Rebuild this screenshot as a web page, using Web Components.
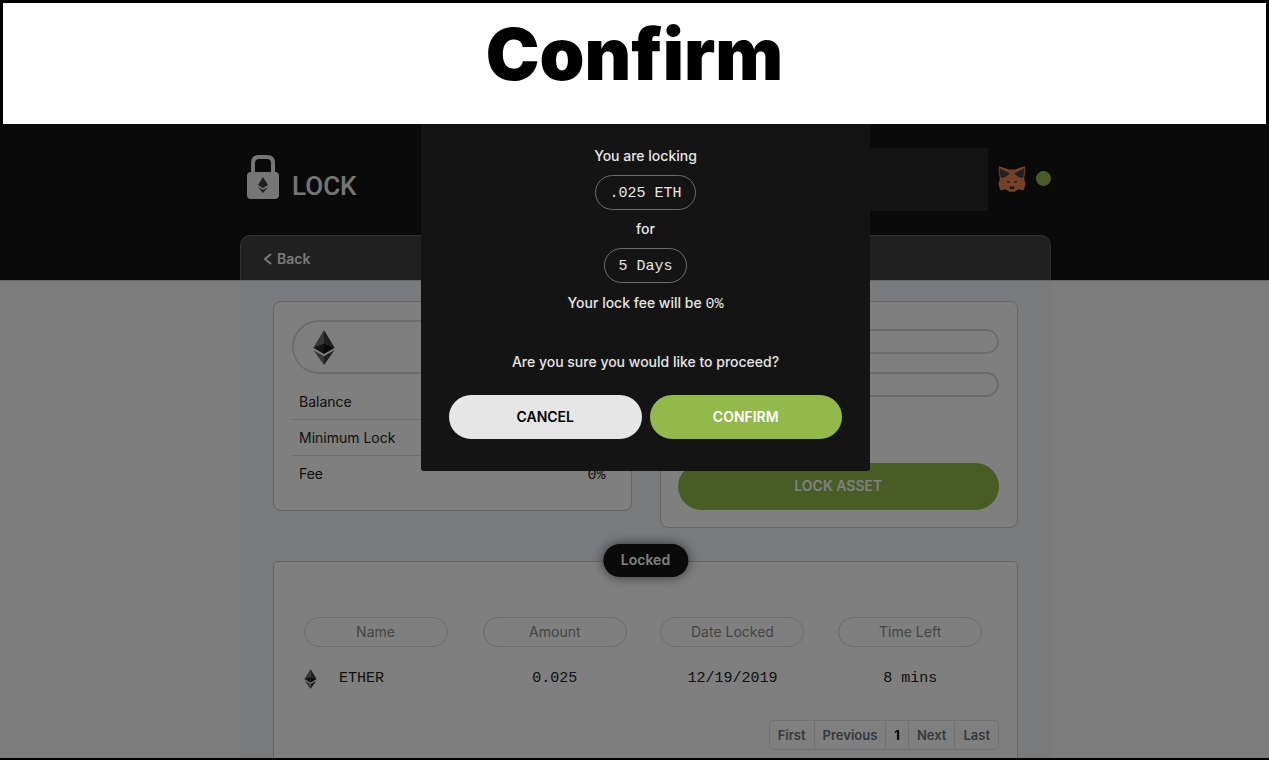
<!DOCTYPE html>
<html lang="en">
<head>
<meta charset="utf-8">
<meta name="viewport" content="width=device-width, initial-scale=1">
<title>Lock - Confirm</title>
<style>
  html, body {
    height: 100%;
    margin: 0;
  }

  body {
    --ink: #141414;
    --green: #93b94a;
    --line: #cacaca;
    --line-soft: #dadada;
    --mono: "Liberation Mono", monospace;
    --shift: 22px;

    display: flex;
    flex-direction: column;
    box-sizing: border-box;
    border-bottom: 2px solid #000;
    overflow: hidden;
    font: 14px/20px Inter, sans-serif;
    color: #222;
  }
</style>
</head>
<body>

<title-banner>Confirm</title-banner>

<lock-app>
  <app-header slot="header"></app-header>

  <asset-card slot="asset"></asset-card>
  <lock-form slot="form"></lock-form>
  <locked-table slot="table"></locked-table>

  <confirm-modal slot="modal" amount=".025 ETH" duration="5 Days" fee="0%"></confirm-modal>
</lock-app>

<script>
// Small base class: subclasses only return their markup.
class BaseElement extends HTMLElement {
  constructor() {
    super();
    this.attachShadow({ mode: "open" });
  }

  connectedCallback() {
    this.shadowRoot.innerHTML = this.template();
  }
}

class TitleBanner extends BaseElement {
  template() {
    return `
      <style>
        :host {
          display: block;
          flex: none;
          border: 3px solid #000;
          border-bottom: 0;
          background: #fff;
        }

        h1 {
          margin: 0;
          padding-bottom: 19px;
          text-align: center;
          color: #000;
          font-size: 72px;
          font-weight: 900;
          line-height: 102px;
        }
      </style>
      <h1><slot></slot></h1>
    `;
  }
}

class LockApp extends BaseElement {
  template() {
    return `
      <style>
        :host {
          display: flex;
          flex-direction: column;
          flex: 1;
          min-height: 0;
          position: relative;
          overflow: hidden;
          background: #f8f8fb;
        }

        .body {
          flex: 1;
          padding-left: var(--shift);
        }

        .panel {
          box-sizing: border-box;
          max-width: 811px;
          height: 100%;
          margin: 0 auto;
          padding: 20px 32px 0;
          border: 1px solid #eef1f5;
          border-top: 0;
          background: #f2f5f9;
        }

        .cards {
          display: grid;
          grid-template-columns: 1fr 1fr;
          align-items: start;
          gap: 28px;
          margin-bottom: 33px;
        }
      </style>

      <slot name="header"></slot>

      <div class="body">
        <main class="panel">
          <div class="cards">
            <slot name="asset"></slot>
            <slot name="form"></slot>
          </div>
          <slot name="table"></slot>
        </main>
      </div>

      <slot name="modal"></slot>
    `;
  }
}

class EtherIcon extends BaseElement {
  template() {
    return `
      <style>
        :host { display: inline-flex; }
        svg { display: block; width: 100%; height: 100%; }
      </style>
      <svg viewBox="0 0 64 105" aria-hidden="true">
        <path fill="#6e6e6e" d="M32 0 0 53l32-14z"/>
        <path fill="#3e3e3e" d="M32 0v39l32 14z"/>
        <path fill="#262626" d="M0 53l32 19V39z"/>
        <path fill="#121212" d="M32 39v33l32-19z"/>
        <path fill="#6e6e6e" d="M0 60l32 45V79z"/>
        <path fill="#3e3e3e" d="M32 79v26l32-45z"/>
      </svg>
    `;
  }
}

class AppHeader extends BaseElement {
  template() {
    return `
      <style>
        :host {
          display: block;
          flex: none;
          padding-left: var(--shift);
          background: var(--ink);
          border-bottom: 1px solid #d0d0d0;
        }

        .wrap {
          max-width: 811px;
          margin: 0 auto;
        }

        .top {
          display: flex;
          justify-content: space-between;
          padding: 24px 0;
        }

        .brand {
          display: flex;
          align-items: flex-end;
          gap: 12px;
          padding: 0 7px 11px;
          color: #ececec;
          font: 500 26px/28px Roboto, sans-serif;
          text-decoration: none;
        }

        .brand svg {
          width: 33px;
          height: 45px;
        }

        .account {
          display: flex;
          align-items: center;
          gap: 10px;
        }

        .address {
          width: 240px;
          height: 63px;
          background: #262626;
        }

        .fox {
          width: 28px;
          height: 26px;
          padding-bottom: 2px;
        }

        .status {
          width: 15px;
          height: 15px;
          margin-bottom: 3px;
          border-radius: 50%;
          background: var(--green);
        }

        nav {
          display: flex;
          padding: 13px 22px 11px;
          border: 1px solid #606060;
          border-bottom: 0;
          border-radius: 10px 10px 0 0;
          background: #404040;
        }

        nav a {
          display: flex;
          align-items: center;
          gap: 5px;
          color: #f2f2f2;
          font-weight: 600;
          text-decoration: none;
        }

        nav svg {
          width: 9px;
          height: 12px;
        }
      </style>

      <div class="wrap">
        <header class="top">
          <a class="brand" href="#">
            <svg viewBox="0 0 33 45" aria-hidden="true">
              <path d="M6 20V8q0-6 6-6h8q6 0 6 6v12" fill="none" stroke="#ececec" stroke-width="4"/>
              <rect y="17" width="32" height="27" rx="4" fill="#ececec"/>
              <path d="M16 22l-5 8 5 3 5-3zM11 32l5 6 5-6-5 3z" fill="#3c3c3c"/>
            </svg>
            LOCK
          </a>
          <div class="account">
            <div class="address"></div>
            <svg class="fox" viewBox="0 0 80 77" aria-hidden="true">
              <path d="M2 1 31 10h18L78 1l2 14-4 22 4 16-5 19-16-3-11 7H32l-11-7-16 3-5-19 4-16L0 15z" fill="#e88548"/>
              <path d="M4 7 33 22 24 30 8 36 3 18zM76 7 47 22l9 8 16 6 5-18z" fill="#3c4044"/>
              <path d="M25 45h8l1 5-9-2zM55 45h-8l-1 5 9-2zM34 61h12l1 7H33z" fill="#33302e"/>
            </svg>
            <span class="status"></span>
          </div>
        </header>

        <nav>
          <a href="#">
            <svg viewBox="0 0 9 12" aria-hidden="true">
              <path d="M8 1 2 6l6 5" fill="none" stroke="currentColor" stroke-width="2"/>
            </svg>
            Back
          </a>
        </nav>
      </div>
    `;
  }
}

class AssetCard extends BaseElement {
  template() {
    return `
      <style>
        :host {
          display: block;
          padding: 18px;
          border: 1px solid var(--line);
          border-radius: 8px;
          background: #fff;
        }

        .picker {
          display: flex;
          align-items: center;
          box-sizing: border-box;
          width: 100%;
          height: 54px;
          margin: 0 0 10px;
          padding: 0 19px;
          border: 2px solid var(--line-soft);
          border-radius: 27px;
          background: none;
        }

        ether-icon {
          width: 22px;
          height: 35px;
        }

        dl {
          margin: 0;
        }

        .row {
          display: flex;
          justify-content: space-between;
          padding: 8px 7px 7px;
          border-bottom: 1px solid #dcdcdc;
        }

        .row:last-child {
          border-bottom-color: transparent;
        }

        dd {
          margin: 0;
          font: 15px/24px var(--mono);
          height: 20px;
        }
      </style>

      <button class="picker" type="button" aria-label="Asset">
        <ether-icon></ether-icon>
      </button>

      <dl>
        <div class="row"><dt>Balance</dt><dd></dd></div>
        <div class="row"><dt>Minimum Lock</dt><dd></dd></div>
        <div class="row"><dt>Fee</dt><dd>0%</dd></div>
      </dl>
    `;
  }
}

class LockForm extends BaseElement {
  template() {
    return `
      <style>
        :host {
          display: block;
          padding: 27px 18px 17px 17px;
          border: 1px solid var(--line);
          border-radius: 8px;
          background: #fff;
        }

        form {
          display: grid;
          gap: 18px;
        }

        input {
          box-sizing: border-box;
          width: 100%;
          height: 25px;
          padding: 0 12px;
          border: 2px solid var(--line-soft);
          border-radius: 13px;
          background: none;
          font: 15px/20px var(--mono);
        }

        button {
          height: 47px;
          margin-top: 48px;
          padding: 0 0 2px;
          border: 0;
          border-radius: 24px;
          background: var(--green);
          color: #fff;
          font: 600 14px/20px Inter, sans-serif;
        }
      </style>

      <form>
        <input type="text" aria-label="Amount">
        <input type="text" aria-label="Days">
        <button type="button">LOCK ASSET</button>
      </form>
    `;
  }
}

class LockedTable extends BaseElement {
  constructor() {
    super();
    this.columns = ["Name", "Amount", "Date Locked", "Time Left"];
    this.rows = [["ETHER", "0.025", "12/19/2019", "8 mins"]];
    this.pages = ["First", "Previous", "1", "Next", "Last"];
  }

  template() {
    const head = this.columns
      .map((name) => `<th scope="col"><span>${name}</span></th>`)
      .join("");

    const body = this.rows
      .map(([name, ...cells]) => `
        <tr>
          <td><div class="name"><ether-icon></ether-icon>${name}</div></td>
          ${cells.map((cell) => `<td>${cell}</td>`).join("")}
        </tr>`)
      .join("");

    const pager = this.pages
      .map((page) => `<button type="button"${page === "1" ? ' class="current"' : ""}>${page}</button>`)
      .join("");

    return `
      <style>
        :host {
          display: block;
          position: relative;
          height: 300px;
          padding: 55px 18px 0 11px;
          border: 1px solid var(--line);
          border-radius: 5px;
          background: #fff;
        }

        h2 {
          position: absolute;
          top: -18px;
          left: 50%;
          transform: translateX(-50%);
          margin: 0;
          padding: 6px 18px 7px;
          border-radius: 17px;
          background: var(--ink);
          color: #fff;
          font-size: 14px;
          font-weight: 600;
          box-shadow: 0 0 12px rgba(0, 0, 0, .6);
        }

        table {
          width: 100%;
          table-layout: fixed;
          border-collapse: collapse;
        }

        th {
          padding: 0;
          font-weight: 400;
          color: #8c8c8c;
        }

        th:first-child {
          width: 181px;
        }

        th span {
          display: block;
          max-width: 142px;
          margin: 0 auto;
          padding: 4px 0;
          border: 1px solid #d8d8d8;
          border-radius: 15px;
        }

        td {
          padding: 22px 0 20px;
          text-align: center;
          font: 15px/20px var(--mono);
        }

        .name {
          display: flex;
          align-items: center;
          gap: 22px;
          padding-left: 19px;
        }

        ether-icon {
          width: 13px;
          height: 20px;
        }

        .pager {
          display: flex;
          width: max-content;
          margin: 11px 0 0 auto;
          border: 1px solid #dee2e6;
          border-radius: 4px;
        }

        .pager button {
          padding: 4px 8px;
          border: 0;
          border-left: 1px solid #dee2e6;
          background: none;
          color: #6c757d;
          font: 600 13px/20px Inter, sans-serif;
        }

        .pager button:first-child {
          border-left: 0;
        }

        .pager .current {
          color: #000;
          font-weight: 700;
        }
      </style>

      <h2>Locked</h2>

      <table>
        <thead><tr>${head}</tr></thead>
        <tbody>${body}</tbody>
      </table>

      <div class="pager">${pager}</div>
    `;
  }
}

class ConfirmModal extends BaseElement {
  template() {
    return `
      <style>
        /* dark veil over the whole app */
        :host {
          display: flex;
          justify-content: center;
          align-items: flex-start;
          position: absolute;
          inset: 0;
          padding-left: var(--shift);
          background: rgba(0, 0, 0, .5);
        }

        dialog {
          position: static;
          display: flex;
          flex-direction: column;
          align-items: center;
          gap: 9px;
          box-sizing: border-box;
          width: 100%;
          max-width: 449px;
          margin: 0;
          padding: 22px 28px 32px;
          border: 0;
          border-radius: 0 0 3px 3px;
          background: var(--ink);
          color: #e6e6e6;
          font-weight: 500;
        }

        p {
          margin: 0;
        }

        .value {
          padding: 8px 13px 5px;
          border: 1px solid #6e6e6e;
          border-radius: 18px;
          white-space: pre;
        }

        .value, .fee {
          font-family: var(--mono);
          font-size: 15px;
          font-weight: 400;
        }

        .summary {
          padding-top: 1px;
        }

        .fee {
          line-height: 1;
        }

        .question {
          margin-top: 30px;
        }

        .actions {
          display: grid;
          grid-template-columns: 1fr 1fr;
          gap: 8px;
          width: 100%;
          margin-top: 14px;
        }

        button {
          height: 44px;
          border: 0;
          border-radius: 22px;
          background: #e6e6e6;
          color: #000;
          font: 600 14px/20px Inter, sans-serif;
        }

        .confirm {
          background: var(--green);
          color: #fff;
        }
      </style>

      <dialog open>
        <p>You are locking</p>
        <p class="value">${this.getAttribute("amount")}</p>
        <p>for</p>
        <p class="value">${this.getAttribute("duration")}</p>
        <p class="summary">Your lock fee will be <span class="fee">${this.getAttribute("fee")}</span></p>
        <p class="question">Are you sure you would like to proceed?</p>
        <div class="actions">
          <button type="button">CANCEL</button>
          <button type="button" class="confirm">CONFIRM</button>
        </div>
      </dialog>
    `;
  }
}

customElements.define("title-banner", TitleBanner);
customElements.define("lock-app", LockApp);
customElements.define("ether-icon", EtherIcon);
customElements.define("app-header", AppHeader);
customElements.define("asset-card", AssetCard);
customElements.define("lock-form", LockForm);
customElements.define("locked-table", LockedTable);
customElements.define("confirm-modal", ConfirmModal);
</script>
</body>
</html>
